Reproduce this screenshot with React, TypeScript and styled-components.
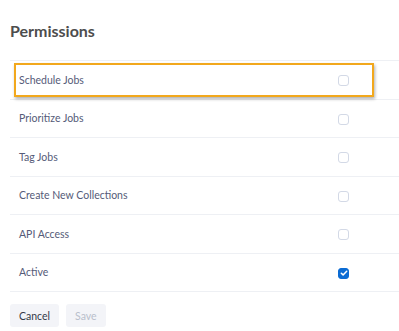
import React, { useState } from "react";
import { createGlobalStyle, styled } from "styled-components";

const GlobalStyle = createGlobalStyle`
  html, body {
    margin: 0;
    padding: 0;
    background: #ffffff;
    font-family: Lato, "Open Sans", sans-serif;
  }
`;

const permissions = [
  { label: "Schedule Jobs", checked: false },
  { label: "Prioritize Jobs", checked: false },
  { label: "Tag Jobs", checked: false },
  { label: "Create New Collections", checked: false },
  { label: "API Access", checked: false },
  { label: "Active", checked: true },
];

const App = () => {
  const [items, setItems] = useState(permissions);

  const toggle = (index: number) => {
    setItems((prev) =>
      prev.map((item, i) => (i === index ? { ...item, checked: !item.checked } : item))
    );
  };

  return (
    <Page>
      <GlobalStyle />
      <Title>Permissions</Title>
      <List>
        {items.map((item, i) => (
          <Row key={item.label} onClick={() => toggle(i)}>
            <Label>{item.label}</Label>
            <Box $checked={item.checked}>
              {item.checked && (
                <svg width="8" height="8" viewBox="0 0 8 8">
                  <path
                    d="M1.3 4.2 L3.1 5.9 L6.7 2.2"
                    fill="none"
                    stroke="#fff"
                    strokeWidth="1.5"
                    strokeLinecap="round"
                    strokeLinejoin="round"
                  />
                </svg>
              )}
            </Box>
            {i === 0 && <Highlight />}
          </Row>
        ))}
      </List>
      <Actions>
        <Button>Cancel</Button>
        <Button $disabled>Save</Button>
      </Actions>
    </Page>
  );
};

export default App;

const Page = styled.div`
  padding: 21px 0 0 10px;
  width: 389px;
`;

const Title = styled.h2`
  margin: 0 0 19px;
  font-family: Lato, sans-serif;
  font-size: 16px;
  font-weight: 700;
  color: #4d4d4d;
  line-height: 20px;
`;

const List = styled.div`
  border-top: 1px solid #eef0f4;
`;

const Row = styled.div`
  position: relative;
  display: flex;
  align-items: center;
  justify-content: space-between;
  height: 37.5px;
  padding: 0 50px 0 9px;
  border-bottom: 1px solid #eef0f4;
  cursor: pointer;
`;

const Label = styled.span`
  font-size: 10.5px;
  color: #555b78;
`;

const Box = styled.span<{ $checked?: boolean }>`
  display: flex;
  align-items: center;
  justify-content: center;
  box-sizing: border-box;
  width: 11px;
  height: 11px;
  margin-top: 2px;
  border-radius: 3px;
  border: 1px solid ${(p) => (p.$checked ? "#0b6bd3" : "#d3d9e6")};
  background: ${(p) => (p.$checked ? "#0b6bd3" : "#ffffff")};
`;

const Highlight = styled.div`
  position: absolute;
  left: 4px;
  top: 2px;
  width: 360px;
  height: 34px;
  box-sizing: border-box;
  border: 2px solid #f2a81d;
  box-shadow: 1px 2px 3px rgba(0, 0, 0, 0.3);
  pointer-events: none;
`;

const Actions = styled.div`
  display: flex;
  gap: 7px;
  margin-top: 12px;
`;

const Button = styled.button<{ $disabled?: boolean }>`
  height: 23px;
  padding: 0 9px;
  border: none;
  border-radius: 3px;
  background: #f3f4f8;
  font-family: Lato, sans-serif;
  font-size: 10.5px;
  color: ${(p) => (p.$disabled ? "#b9bfcc" : "#333a48")};
  cursor: ${(p) => (p.$disabled ? "default" : "pointer")};
`;
